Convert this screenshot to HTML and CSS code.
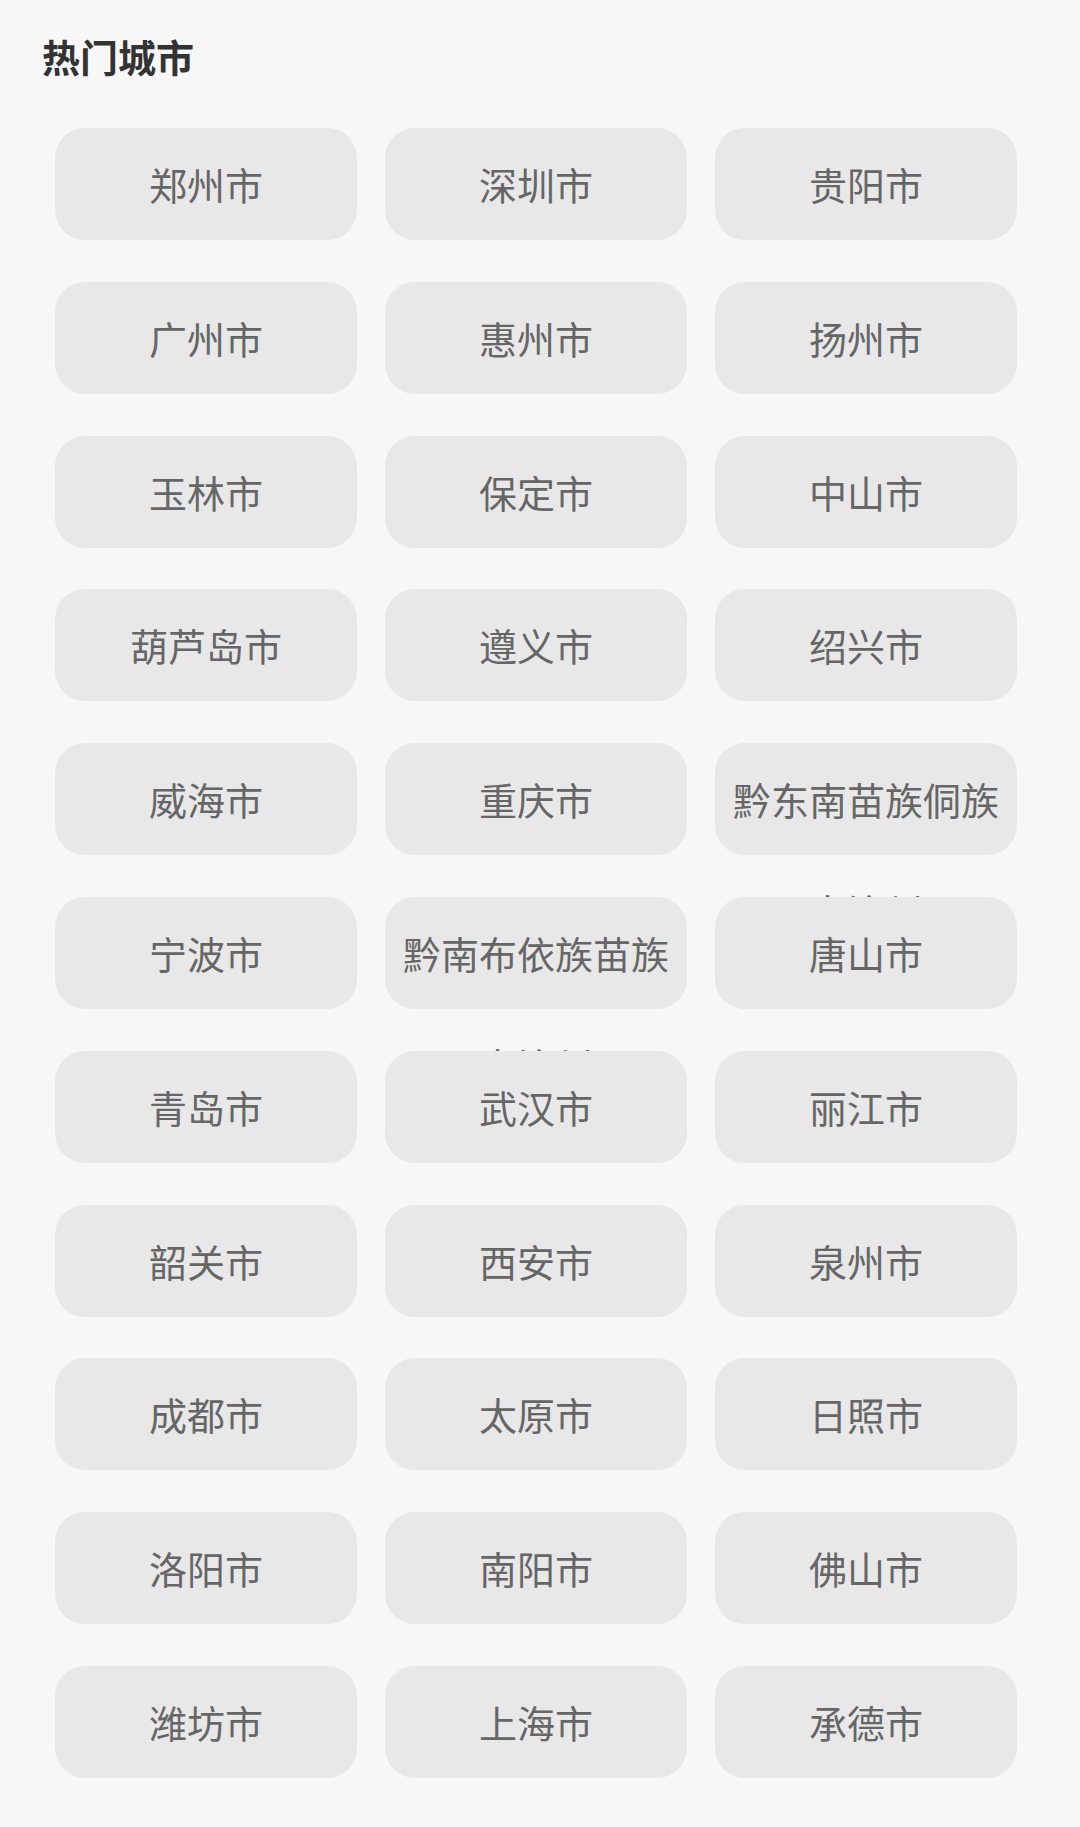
FILE: index.html
```html
<!DOCTYPE html>
<html>
    <head>
        <meta charset="utf-8">
        <link rel="stylesheet" href="styles.css">
    </head>
    <body>
        <div class="hot-city">
            <h2 class="hot-title">热门城市</h2>
            <div class="city-grid">
                <div class="city-item">郑州市</div>
                <div class="city-item">深圳市</div>
                <div class="city-item">贵阳市</div>
                <div class="city-item">广州市</div>
                <div class="city-item">惠州市</div>
                <div class="city-item">扬州市</div>
                <div class="city-item">玉林市</div>
                <div class="city-item">保定市</div>
                <div class="city-item">中山市</div>
                <div class="city-item">葫芦岛市</div>
                <div class="city-item">遵义市</div>
                <div class="city-item">绍兴市</div>
                <div class="city-item">威海市</div>
                <div class="city-item">重庆市</div>
                <div class="city-item">黔东南苗族侗族自治州</div>
                <div class="city-item">宁波市</div>
                <div class="city-item">黔南布依族苗族自治州</div>
                <div class="city-item">唐山市</div>
                <div class="city-item">青岛市</div>
                <div class="city-item">武汉市</div>
                <div class="city-item">丽江市</div>
                <div class="city-item">韶关市</div>
                <div class="city-item">西安市</div>
                <div class="city-item">泉州市</div>
                <div class="city-item">成都市</div>
                <div class="city-item">太原市</div>
                <div class="city-item">日照市</div>
                <div class="city-item">洛阳市</div>
                <div class="city-item">南阳市</div>
                <div class="city-item">佛山市</div>
                <div class="city-item">潍坊市</div>
                <div class="city-item">上海市</div>
                <div class="city-item">承德市</div>
            </div>
        </div>
    </body>
</html>
```

FILE: styles.css
```css
body, html {
    margin: 0;
    padding: 0;
    background-color: #f7f7f7;
    font-family: "Noto Sans CJK SC", "Noto Sans", sans-serif;
}

.hot-city {
    padding: 37px 0 0 0;
}

.hot-title {
    margin: 0 0 0 42px;
    font-size: 38px;
    line-height: 38px;
    font-weight: bold;
    color: #333;
}

.city-grid {
    display: grid;
    grid-template-columns: repeat(3, 302px);
    grid-auto-rows: 112px;
    column-gap: 28px;
    row-gap: 41.8px;
    margin: 53px 0 0 55px;
}

.city-item {
    background-color: #e8e8e8;
    border-radius: 30px;
    color: #666;
    font-size: 38px;
    line-height: 112px;
    text-align: center;
}
```
